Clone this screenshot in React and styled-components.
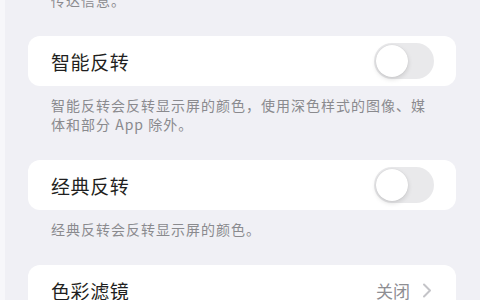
import React from "react";
import styled, { createGlobalStyle } from "styled-components";

const Global = createGlobalStyle`
  html, body { margin: 0; padding: 0; background: #f0f0f5; overflow: hidden; }
  body { font-family: "Noto Sans CJK SC", "Noto Sans", sans-serif; }
`;

const Page = styled.div`
  width: 480px;
  height: 300px;
  overflow: hidden;
  box-sizing: border-box;
  border-left: 5px solid #f7f7fa;
  background: #f0f0f5;
  padding: 0 24px 0 23px;
  display: flex;
  flex-direction: column;
`;

const Footnote = styled.div`
  padding: 10px 19px 26px 23px;
  margin-top: ${(p) => (p.$first ? "-19px" : "0")};
  font-size: 14px;
  letter-spacing: 1px;
  line-height: 19px;
  color: #8a8a8e;
`;

const Card = styled.div`
  background: #ffffff;
  border-radius: 12px;
  height: 50px;
  flex-shrink: 0;
  display: flex;
  align-items: center;
  justify-content: space-between;
  padding: 0 22px 0 23px;
`;

const Label = styled.span`
  font-size: 19px;
  letter-spacing: 0.6px;
  color: #1f1f21;
`;

const Toggle = styled.div`
  width: 60px;
  height: 36px;
  border-radius: 18px;
  background: #e9e9eb;
  padding: 2px;
  box-sizing: border-box;
  display: flex;
  align-items: center;
`;

const Thumb = styled.div`
  width: 32px;
  height: 32px;
  border-radius: 50%;
  background: #fff;
  box-shadow: 0 2px 5px rgba(0, 0, 0, 0.14), 0 0 1px rgba(0, 0, 0, 0.12);
`;

const Value = styled.div`
  display: flex;
  align-items: center;
  gap: 12px;
  font-size: 17px;
  color: #8e8e93;
  padding-right: 2px;
`;

const Chevron = () => (
  <svg width="10" height="15" viewBox="0 0 10 15" fill="none">
    <path d="M2 1.5 L8 7.5 L2 13.5" stroke="#c4c4c8" strokeWidth="2" strokeLinecap="round" strokeLinejoin="round" />
  </svg>
);

export default function App() {
  return (
    <>
      <Global />
      <Page>
        <Footnote $first>传达信息。</Footnote>
        <Card>
          <Label>智能反转</Label>
          <Toggle><Thumb /></Toggle>
        </Card>
        <Footnote>智能反转会反转显示屏的颜色，使用深色样式的图像、媒体和部分 App 除外。</Footnote>
        <Card>
          <Label>经典反转</Label>
          <Toggle><Thumb /></Toggle>
        </Card>
        <Footnote>经典反转会反转显示屏的颜色。</Footnote>
        <Card>
          <Label>色彩滤镜</Label>
          <Value>关闭<Chevron /></Value>
        </Card>
      </Page>
    </>
  );
}
